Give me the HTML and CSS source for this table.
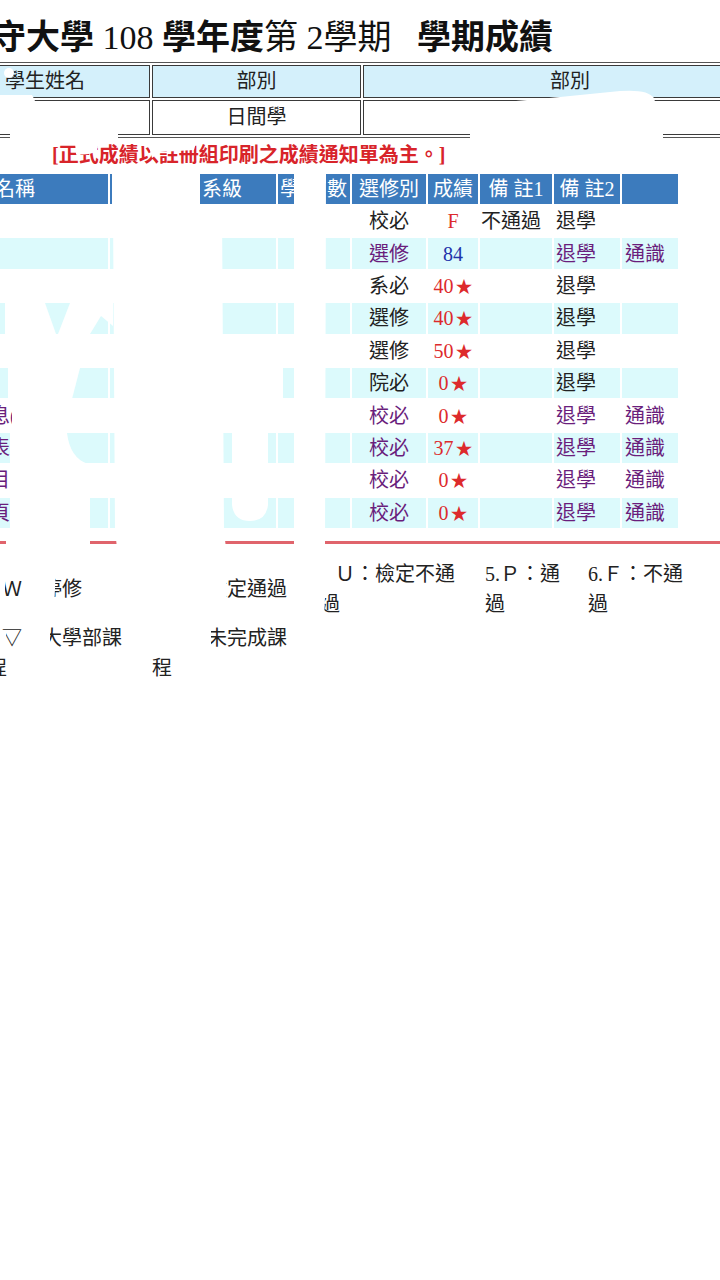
FILE: index.html
```html
<!DOCTYPE html>
<html lang="zh-Hant">
<head>
<meta charset="utf-8">
<title>學期成績</title>
<link rel="stylesheet" href="styles.css">
</head>
<body>
<main class="page">
  <h1 class="title"><b>守大學</b> 108 <b>學年度</b>第 2學期&nbsp;&nbsp;&nbsp;<b>學期成績</b></h1>

  <table class="info">
    <tr class="info-head">
      <td class="i1">學生姓名</td>
      <td class="i2">部別</td>
      <td class="i3">部別</td>
    </tr>
    <tr class="info-body">
      <td class="i1"></td>
      <td class="i2">日間學</td>
      <td class="i3"></td>
    </tr>
  </table>

  <p class="notice">[正式成績以註冊組印刷之成績通知單為主。]</p>

  <table class="grades">
    <colgroup>
      <col class="w-name"><col class="w-class"><col class="w-dept"><col class="w-cr"><col class="w-hr">
      <col class="w-type"><col class="w-score"><col class="w-n1"><col class="w-n2"><col class="w-n3">
    </colgroup>
    <thead>
      <tr>
        <th class="name">科目名稱</th>
        <th>開課班級</th>
        <th class="dept">系級</th>
        <th class="credit" colspan="2">學分數</th>
        <th>選修別</th>
        <th>成績</th>
        <th>備 註1</th>
        <th>備 註2</th>
        <th></th>
      </tr>
    </thead>
    <tbody>
      <tr><td class="name">國文</td><td></td><td></td><td></td><td></td><td class="type">校必</td><td class="score red">F</td><td class="n1">不通過</td><td class="n2">退學</td><td class="n3"></td></tr>
      <tr class="ge"><td class="name">英文</td><td></td><td></td><td></td><td></td><td class="type">選修</td><td class="score blue">84</td><td class="n1"></td><td class="n2">退學</td><td class="n3">通識</td></tr>
      <tr><td class="name">程式</td><td></td><td></td><td></td><td></td><td class="type">系必</td><td class="score red">40<span class="star">★</span></td><td class="n1"></td><td class="n2">退學</td><td class="n3"></td></tr>
      <tr><td class="name">網路</td><td></td><td></td><td></td><td></td><td class="type">選修</td><td class="score red">40<span class="star">★</span></td><td class="n1"></td><td class="n2">退學</td><td class="n3"></td></tr>
      <tr><td class="name">設計</td><td></td><td></td><td></td><td></td><td class="type">選修</td><td class="score red">50<span class="star">★</span></td><td class="n1"></td><td class="n2">退學</td><td class="n3"></td></tr>
      <tr><td class="name">數學</td><td></td><td></td><td></td><td></td><td class="type">院必</td><td class="score red">0<span class="star">★</span></td><td class="n1"></td><td class="n2">退學</td><td class="n3"></td></tr>
      <tr class="ge"><td class="name shown">休息(一)</td><td></td><td></td><td></td><td></td><td class="type">校必</td><td class="score red">0<span class="star">★</span></td><td class="n1"></td><td class="n2">退學</td><td class="n3">通識</td></tr>
      <tr class="ge"><td class="name shown">代表</td><td></td><td></td><td></td><td></td><td class="type">校必</td><td class="score red">37<span class="star">★</span></td><td class="n1"></td><td class="n2">退學</td><td class="n3">通識</td></tr>
      <tr class="ge"><td class="name shown">科目</td><td></td><td></td><td></td><td></td><td class="type">校必</td><td class="score red">0<span class="star">★</span></td><td class="n1"></td><td class="n2">退學</td><td class="n3">通識</td></tr>
      <tr class="ge"><td class="name shown">網頁</td><td></td><td></td><td></td><td></td><td class="type">校必</td><td class="score red">0<span class="star">★</span></td><td class="n1"></td><td class="n2">退學</td><td class="n3">通識</td></tr>
    </tbody>
  </table>

  <div class="redline"></div>

  <table class="legend">
    <colgroup>
      <col class="l1"><col class="l2"><col class="l3"><col class="l4"><col class="l5">
    </colgroup>
    <tr>
      <td>2.Ｗ：停修</td>
      <td>3.Ｓ：檢定通過</td>
      <td>4.Ｕ：檢定不通過</td>
      <td>5.Ｐ：通過</td>
      <td>6.Ｆ：不通過</td>
    </tr>
    <tr>
      <td>8.▽：大學部課程</td>
      <td>9.＊：未完成課程</td>
      <td></td>
      <td></td>
      <td></td>
    </tr>
  </table>
</main>

<svg class="redact" width="720" height="1280" viewBox="0 0 720 1280" aria-hidden="true">
  <g fill="#fff">
    <!-- header table -->
    <circle cx="9" cy="73" r="5"/>
    <path d="M0,95 L32,95 Q42,112 36,128 L118,130 L118,141 L10,141 L10,132 L0,132 Z"/>
    <path d="M470,141 L470,131 Q500,120 516,101 L560,97 L620,91 Q648,89 654,98 L663,131 L663,141 Z"/>
    <!-- notice -->
    <path d="M75,143 L98,143 L97,151 Q88,156 76,154 Z"/>
    <path d="M148,143 L196,143 L194,150 L160,152 L152,158 Z"/>
    <!-- grades: course column -->
    <path d="M5,303 L45,303 L56,334 L5,334 Z"/>
    <path d="M70,303 L113,303 L113,326 L101,316 L90,334 L58,334 Z"/>
    <path d="M8,368 L80,368 L72,399 L8,399 Z"/>
    <path d="M12,401 L66,401 L66,431 L12,431 Z"/>
    <path d="M10,433 L67,433 Q70,458 88,464 L10,464 Z"/>
    <path d="M12,466 L66,466 L66,496 L12,496 Z"/>
    <path d="M10,498 L90,498 L90,548 L6,548 L6,530 L10,529 Z"/>
    <!-- class / dept columns -->
    <path d="M112,172 L200,172 L200,206 L222,206 L224,532 L226,548 L117,548 L115,530 L113,206 L112,206 Z"/>
    <path d="M294,172 L326,172 L325,548 L294,548 Z"/>
    <path d="M222,338 L283,338 L283,400 L268,402 L268,505 Q266,521 250,521 Q234,521 232,505 L232,402 L222,400 Z"/>
    <!-- legend -->
    <rect x="0" y="578" width="5" height="22"/>
    <rect x="0" y="630" width="6" height="22"/>
    <path d="M24,565 L56,565 L54,612 L50,622 L50,652 L24,652 Z"/>
    <path d="M148,563 L226,563 L226,612 L211,625 L211,653 L148,653 Z"/>
    <path d="M316,557 L336,557 L336,588 L325,598 L324,620 L316,620 Z"/>
  </g>
</svg>
</body>
</html>
```

FILE: styles.css
```css
html, body {
  margin: 0;
  padding: 0;
  overflow: hidden;
}

body {
  position: relative;
  width: 720px;
  height: 1280px;
  background: #fff;
  color: #222;
  font-family: "Liberation Serif", "Noto Sans CJK TC", serif;
}

.page {
  display: flow-root;
}

/* title */
.title {
  margin: 18px 0 0 -8px;
  font-size: 34px;
  line-height: 40px;
  font-weight: normal;
  white-space: nowrap;
  color: #111;
}
.title b {
  font-weight: bold;
}

/* student info table */
.info {
  margin: 4px 0 0 -12px;
  width: 792px;
  table-layout: fixed;
  border: 1px solid #555;
  border-spacing: 2px;
}
.info td {
  box-sizing: border-box;
  border: 1px solid #3a3a3a;
  padding: 0;
  font-size: 20px;
  text-align: center;
  white-space: nowrap;
  color: #222;
}
.info-head td {
  height: 33px;
  line-height: 31px;
  background: #d4f0fb;
}
.info-body td {
  height: 35px;
  line-height: 33px;
}
.info .i1 {
  width: 159px;
  text-align: left;
  padding-left: 13px;
}
.info .i2 {
  width: 209px;
}
.info .i3 {
  width: 414px;
}

/* notice */
.notice {
  margin: 5px 0 0 52px;
  font-size: 20px;
  line-height: 24px;
  font-weight: bold;
  color: #d8242a;
  white-space: nowrap;
}

/* grades table */
.grades {
  margin: 5px 0 0 -51px;
  width: 731px;
  table-layout: fixed;
  border: 0;
  border-spacing: 2px;
}
.w-name { width: 157px; }
.w-class { width: 88px; }
.w-dept { width: 76px; }
.w-cr { width: 30px; }
.w-hr { width: 40px; }
.w-type { width: 74px; }
.w-score { width: 50px; }
.w-n1 { width: 72px; }
.w-n2 { width: 66px; }
.w-n3 { width: 56px; }

.grades th {
  height: 30px;
  padding: 0;
  background: #3c7bbd;
  color: #fff;
  font-size: 20px;
  font-weight: normal;
  line-height: 30px;
  text-align: center;
  white-space: nowrap;
  overflow: hidden;
}
.grades th.name {
  text-align: left;
  padding-left: 4px;
}
.grades th.dept {
  text-align: left;
  padding-left: 2px;
}
.grades th.credit {
  text-align: left;
  padding-left: 2px;
  letter-spacing: 3.5px;
}

.grades td {
  height: 30.4px;
  padding: 0;
  font-size: 20px;
  line-height: 30px;
  white-space: nowrap;
  overflow: hidden;
  color: #222;
}
.grades tbody tr:nth-child(even) td {
  background: #dcfafc;
}
.grades tr.ge td {
  color: #6a1e7c;
}
.grades td.name {
  padding-left: 0;
}
.grades td.name.shown {
  padding-left: 19px;
}
.grades td.type,
.grades td.score {
  text-align: center;
}
.grades td.n1 { padding-left: 1px; }
.grades td.n2 { padding-left: 2px; }
.grades td.n3 { padding-left: 3px; }

.grades tr td.red { color: #dd2a2c; }
.grades tr td.blue { color: #2233aa; }
.star {
  display: inline-block;
  margin-left: 2px;
  font-size: 17px;
  line-height: 18px;
  vertical-align: 0;
}

/* red rule */
.redline {
  margin-top: 11px;
  height: 3px;
  background: #e0646c;
}

/* legend */
.legend {
  margin: 11px 0 0 -13px;
  table-layout: fixed;
  width: 711px;
  border-spacing: 0 4px;
  font-size: 20px;
  line-height: 30px;
  color: #222;
}
.legend td {
  padding: 0;
  vertical-align: middle;
}
.l1 { width: 165px; }
.l2 { width: 168px; }
.l3 { width: 165px; }
.l4 { width: 103px; }
.l5 { width: 110px; }
.legend td:nth-child(1) { padding-right: 20px; }
.legend td:nth-child(2) { padding-right: 23px; }
.legend td:nth-child(3) { padding-right: 25px; }
.legend td:nth-child(4) { padding-right: 23px; }
.legend td:nth-child(5) { padding-right: 10px; }

/* redaction marks drawn over the scan */
.redact {
  position: absolute;
  top: 0;
  left: 0;
  pointer-events: none;
}
```
